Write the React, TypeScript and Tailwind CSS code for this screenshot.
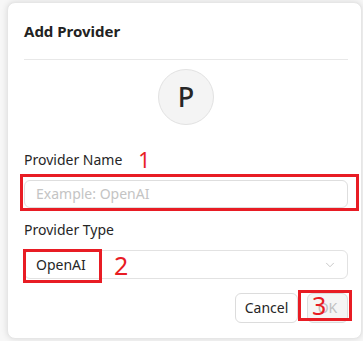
import { ChevronDown } from 'lucide-react';

const font = { fontFamily: '"Noto Sans", "Open Sans", sans-serif' };

function Mark({ className, children }: { className: string; children?: React.ReactNode }) {
  return (
    <div className={`pointer-events-none absolute border-[3px] border-[#e81c24] ${className}`}>
      {children}
    </div>
  );
}

export default function App() {
  return (
    <div className="relative h-[341px] w-[363px] overflow-hidden bg-[#f7f7f7] pl-[7px] pt-[2px]" style={font}>
      <div className="flex h-[337px] w-[355px] flex-col rounded-lg border border-[#e6e6e6] bg-white pl-4 pr-[13px] shadow-[0_0_6px_rgba(0,0,0,0.12)]">
        <div className="border-b border-[#e8e8e8] pb-[18px] pt-[18px]">
          <h2 className="text-[15px] font-bold leading-5 text-[#222]">Add Provider</h2>
        </div>

        <div className="mt-[9px] flex justify-center">
          <div className="flex h-14 w-14 items-center justify-center rounded-full border border-[#e2e2e2] bg-[#f4f4f4] text-[27px] font-medium text-[#262626]">
            P
          </div>
        </div>

        <label className="mt-[25px] flex items-center text-sm leading-5 text-[#262626]">
          Provider Name
          <span className="ml-4 text-[21px] leading-5 text-[#e81c24]">1</span>
        </label>
        <div className="mt-[10px] flex h-7 items-center rounded-md border border-[#dedede] px-[11px] text-sm text-[#c4c4c4]">
          Example: OpenAI
        </div>

        <label className="mt-3 text-sm leading-5 text-[#262626]">Provider Type</label>
        <div className="mt-[10px] flex h-[29px] items-center justify-between rounded-md border border-[#e2e2e2] pl-[11px] pr-[10px] text-sm text-[#262626]">
          <span>OpenAI</span>
          <ChevronDown className="h-3.5 w-3.5 text-[#c0c0c0]" strokeWidth={1.5} />
        </div>

        <div className="mt-[14px] flex justify-end gap-[9px]">
          <button className="h-[30px] w-[63px] rounded-md border border-[#dcdcdc] bg-white text-sm text-[#262626]">
            Cancel
          </button>
          <button className="h-[30px] w-[41px] rounded-md border border-[#dcdcdc] bg-[#f5f5f5] text-sm text-[#c0c0c0]">
            OK
          </button>
        </div>
      </div>

      <Mark className="left-[20px] top-[174px] h-[37px] w-[339px]" />
      <Mark className="left-[23px] top-[249px] h-[34px] w-[79px]" />
      <span className="absolute left-[114px] top-[250px] text-[25px] leading-[30px] text-[#e81c24]">2</span>
      <Mark className="left-[298px] top-[290px] h-[31px] w-[54px]">
        <span className="absolute left-[11px] top-[-3px] text-[25px] leading-[30px] text-[#e81c24]">3</span>
      </Mark>
    </div>
  );
}
